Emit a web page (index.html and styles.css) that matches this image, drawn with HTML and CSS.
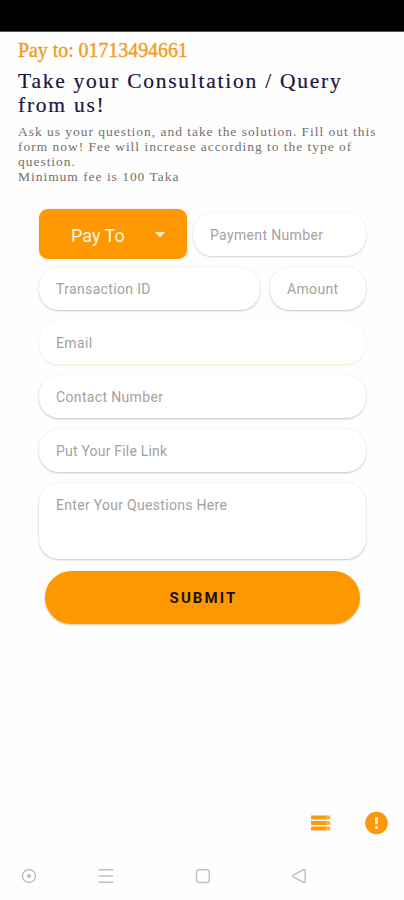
FILE: index.html
```
<!DOCTYPE html>
<html lang="en">
<head>
<meta charset="utf-8">
<title>Consultation</title>
<link rel="stylesheet" href="styles.css">
</head>
<body>
<div class="screen">
  <div class="statusbar"></div>
  <header class="intro">
    <p class="payto">Pay to: 01713494661</p>
    <h1>Take your Consultation / Query<br>from us!</h1>
    <p class="lead">Ask us your question, and take the solution. Fill out this<br>form now! Fee will increase according to the type of<br>question.<br>Minimum fee is 100 Taka</p>
  </header>
  <main class="form">
    <div class="row first">
      <div class="select"><span>Pay To</span><svg width="12" height="6" viewBox="0 0 12 6"><path d="M.5 0h11L6 5.5z" fill="#ffe6c4"/></svg></div>
      <div class="field payment">Payment Number</div>
    </div>
    <div class="row second">
      <div class="field transaction">Transaction ID</div>
      <div class="field amount">Amount</div>
    </div>
    <div class="field email">Email</div>
    <div class="field">Contact Number</div>
    <div class="field link">Put Your File Link</div>
    <div class="field area">Enter Your Questions Here</div>
    <div class="submit">SUBMIT</div>
  </main>
  <div class="tools">
    <svg width="20" height="16" viewBox="0 0 20 16"><path d="M0 .5h15v4H0zM0 6h15v4H0zM0 11.5h15v4H0z" fill="#fb9a0c"/><path d="M15 .5h4.4v4H15zM15 6h4.4v4H15zM15 11.5h4.4v4H15z" fill="#fdb654"/><path d="M16.5 2.5h1.5M16.5 8h1.5M16.5 13.5h1.5" stroke="#fb9a0c" stroke-width="1.4"/></svg>
    <svg width="24" height="24" viewBox="0 0 24 24"><circle cx="12.5" cy="12" r="11.3" fill="#fb980a"/><path d="M12.5 6.3v7M12.5 15.2v2.6" stroke="#fff3df" stroke-width="2.8"/></svg>
  </div>
  <nav class="navbar">
    <svg width="16" height="16" viewBox="0 0 16 16"><circle cx="8" cy="8" r="6.5"/><circle cx="8" cy="8" r="1.3" fill="#aaa"/></svg>
    <svg width="16" height="16" viewBox="0 0 16 16"><path d="M1 1.8h14M1 8h14M1 14.2h14"/></svg>
    <svg width="16" height="16" viewBox="0 0 16 16"><rect x="1.5" y="1.7" width="12.8" height="12.8" rx="2.5"/></svg>
    <svg width="16" height="16" viewBox="0 0 16 16"><path d="M1.2 7.2 11.6 1.6Q13.2 1.2 13.2 2.6V13.4Q13.2 14.8 11.6 14.4L1.2 8.8Q.2 8 1.2 7.2z"/></svg>
  </nav>
</div>
</body>
</html>
```
FILE: styles.css
```
* { box-sizing: border-box; }
body { margin: 0; background: #fefefe; font-family: Roboto, sans-serif; }
p, h1 { margin: 0; font-weight: 400; white-space: nowrap; }
.screen { width: 404px; height: 900px; display: flex; flex-direction: column; overflow: hidden; }
.statusbar { height: 32px; flex: none; background: #000; border-bottom: 1px solid #555; }
.intro { height: 177px; flex: none; padding: 6px 0 0 18px; font-family: "Liberation Serif", serif; }
.payto { font-size: 20px; line-height: 25px; letter-spacing: -.07px; color: #f79a1c; -webkit-text-stroke: .4px #f79a1c; }
h1 { margin-top: 6px; font-size: 21.5px; line-height: 24px; letter-spacing: 1.75px; color: #1b1540; -webkit-text-stroke: .2px #1b1540; }
.lead { margin-top: 7px; font-size: 13.5px; line-height: 15px; letter-spacing: .97px; color: #74716c; }
.form { padding: 0 38px 0 39px; display: flex; flex-direction: column; gap: 11px; }
.row { display: flex; }
.first { height: 50px; gap: 6px; align-items: center; }
.second { gap: 10px; margin-top: -3px; }
.select { width: 148px; height: 50px; flex: none; border-radius: 9px; background: #ff9800; color: #fff6e6; font-size: 18px; display: flex; align-items: center; justify-content: space-between; padding: 2px 21px 0 32px; box-shadow: 0 0 2px #ffd79b; }
.field { height: 43px; border-radius: 20px; padding: 0 17px; background: #fff; font-size: 14px; line-height: 45px; letter-spacing: .35px; color: #a2a2a2; box-shadow: 0 1px 2px #c4c4c4, 0 0 2px #eee; white-space: nowrap; }
.payment { flex: 1; box-shadow: 0 1px 2px #d5d3cd, 0 0 2px #eee; }
.transaction { width: 221px; }
.amount { flex: 1; }
.email { box-shadow: 0 1px 2px #efebcf, 0 0 2px #f6f4e6; }
.link { letter-spacing: .2px; }
.area { height: 76px; letter-spacing: .3px; }
.submit { height: 53px; margin: 1px 6px 0; border-radius: 27px; background: #ff9800; color: #17120b; font-size: 15px; font-weight: 700; letter-spacing: 2.1px; display: flex; align-items: center; justify-content: center; padding: 1px 0 0 2px; box-shadow: 0 1px 2px #d6c5a8; }
.tools { margin-top: auto; height: 24px; padding: 0 16px 0 311px; display: flex; align-items: center; justify-content: space-between; }
.navbar { margin-top: 33px; margin-bottom: 16px; height: 16px; padding-left: 21px; display: flex; flex: none; gap: 81px; }
.navbar svg { fill: none; stroke: #bebebe; stroke-width: 1.4; }
.navbar svg:first-child { margin-right: -20px; }
```
